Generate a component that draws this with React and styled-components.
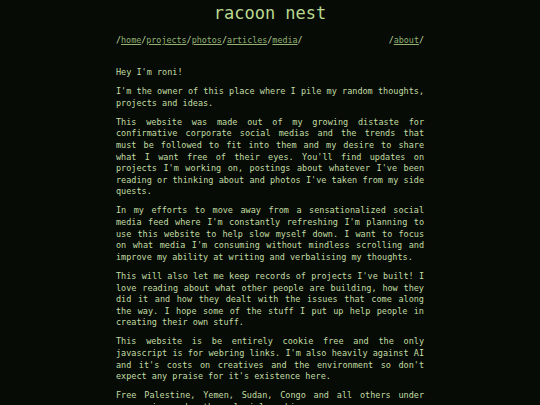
import React from "react";
import styled, { createGlobalStyle } from "styled-components";

const Global = createGlobalStyle`
  html, body { margin: 0; padding: 0; background: #060b06; }
  body { font-family: "DejaVu Sans Mono", "Liberation Mono", monospace; color: #c3dda3; }
`;

const Page = styled.div`
  width: 308px;
  margin: 0 auto;
  padding-top: 1px;
`;

const Title = styled.h1`
  margin: 1px 0 0;
  font-size: 17px;
  font-weight: normal;
  line-height: 22px;
  text-align: center;
  color: #b9d88f;
`;

const Nav = styled.nav`
  display: flex;
  justify-content: space-between;
  margin-top: 11px;
  font-size: 8.4px;
  line-height: 11px;
`;

const NavGroup = styled.span``;

const NavLink = styled.a`
  color: #93b072;
  text-decoration: underline;
  text-underline-offset: 1px;
`;

const Main = styled.main`
  margin-top: 21px;
  font-size: 8.5px;
  line-height: 11.6px;
`;

const P = styled.p`
  margin: 0 0 7.5px;
  text-align: justify;
`;

const links = ["home", "projects", "photos", "articles", "media"];

export default function App() {
  return (
    <>
      <Global />
      <Page>
        <Title>racoon nest</Title>
        <Nav>
          <NavGroup>
            /
            {links.map((l) => (
              <React.Fragment key={l}>
                <NavLink href="#">{l}</NavLink>/
              </React.Fragment>
            ))}
          </NavGroup>
          <NavGroup>
            /<NavLink href="#">about</NavLink>/
          </NavGroup>
        </Nav>
        <Main>
          <P>Hey I'm roni!</P>
          <P>I'm the owner of this place where I pile my random thoughts, projects and ideas.</P>
          <P>
            This website was made out of my growing distaste for confirmative corporate social medias and the trends that must be followed to fit into them and my desire to share what I want free of their eyes. You'll find updates on projects I'm working on, postings about whatever I've been reading or thinking about and photos I've taken from my side quests.
          </P>
          <P>
            In my efforts to move away from a sensationalized social media feed where I'm constantly refreshing I'm planning to use this website to help slow myself down. I want to focus on what media I'm consuming without mindless scrolling and improve my ability at writing and verbalising my thoughts.
          </P>
          <P>
            This will also let me keep records of projects I've built! I love reading about what other people are building, how they did it and how they dealt with the issues that come along the way. I hope some of the stuff I put up help people in creating their own stuff.
          </P>
          <P>
            This website is be entirely cookie free and the only javascript is for webring links. I'm also heavily against AI and it's costs on creatives and the environment so don't expect any praise for it's existence here.
          </P>
          <P>
            Free Palestine, Yemen, Sudan, Congo and all others under oppression under the colonial machine.
          </P>
        </Main>
      </Page>
    </>
  );
}
